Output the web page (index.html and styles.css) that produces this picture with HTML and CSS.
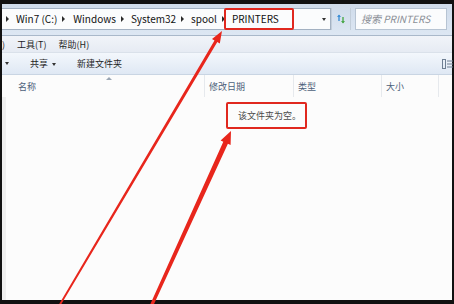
FILE: index.html
```html
<!DOCTYPE html>
<html lang="zh-CN">
<head>
    <meta charset="UTF-8">
    <meta name="viewport" content="width=device-width, initial-scale=1.0">
    <title>PRINTERS</title>
    <link rel="stylesheet" href="styles.css">
</head>
<body>
    <div class="screen">
        <div class="window">
            <div class="address-bar">
                <div class="crumbs">
                    <span class="sep"></span>
                    <span class="crumb">Win7 (C:)</span>
                    <span class="sep"></span>
                    <span class="crumb">Windows</span>
                    <span class="sep"></span>
                    <span class="crumb">System32</span>
                    <span class="sep"></span>
                    <span class="crumb">spool</span>
                    <span class="sep"></span>
                    <span class="crumb crumb-marked">PRINTERS</span>
                    <span class="drop"></span>
                </div>
                <div class="refresh">
                    <svg width="10" height="10" viewBox="0 0 10 10">
                        <path d="M3 1 L3 7" stroke="#3d8fd6" stroke-width="1.4"/>
                        <path d="M1 3 L3 0.5 L5 3 Z" fill="#3d8fd6"/>
                        <path d="M7 3 L7 9" stroke="#4aa84a" stroke-width="1.4"/>
                        <path d="M5 7 L7 9.5 L9 7 Z" fill="#4aa84a"/>
                    </svg>
                </div>
                <div class="search">搜索 PRINTERS</div>
            </div>

            <div class="menubar">
                <span>)</span>
                <span>工具(T)</span>
                <span>帮助(H)</span>
            </div>

            <div class="toolbar">
                <span class="tool-caret"></span>
                <span class="tool">共享 <span class="tool-caret"></span></span>
                <span class="tool">新建文件夹</span>
                <span class="view-icon">
                    <svg width="11" height="10" viewBox="0 0 11 10">
                        <rect x="0.5" y="0.5" width="3" height="9" fill="none" stroke="#6f7f93"/>
                        <path d="M5 2 H11 M5 5 H11 M5 8 H11" stroke="#6f7f93" stroke-width="1"/>
                    </svg>
                </span>
            </div>

            <div class="columns">
                <div class="col col-name"><span class="sort"></span>名称</div>
                <div class="col col-date">修改日期</div>
                <div class="col col-type">类型</div>
                <div class="col col-size">大小</div>
                <div class="col col-rest"></div>
            </div>

            <div class="content">
                <div class="empty">该文件夹为空。</div>
            </div>
        </div>

        <svg class="arrows" width="454" height="304" viewBox="0 0 454 304">
            <polygon fill="#e8261c" points="222,31 219.8,43.6 217.3,42.1 60.8,305 59.2,304 214.5,40.5 212,39"/>
            <polygon fill="#e8261c" points="231,131 230.6,145.1 227.9,143.8 153.6,305 150.4,304 223.3,141.8 220.6,140.5"/>
        </svg>
    </div>
</body>
</html>
```

FILE: styles.css
```css
body {
    margin: 0;
    background-color: #111;
    font-family: "Noto Sans CJK SC", "Liberation Sans", sans-serif;
    color: #1e1e1e;
    overflow: hidden;
}

.screen {
    position: relative;
    width: 454px;
    height: 304px;
    padding: 4px 2px;
    box-sizing: border-box;
    background-color: #111;
}

.window {
    height: 296px;
    display: flex;
    flex-direction: column;
    background-color: #fcfcfc;
}

/* address row */
.address-bar {
    height: 32px;
    display: flex;
    align-items: flex-start;
    padding-top: 4px;
    box-sizing: border-box;
    background: linear-gradient(#cfdbea, #dde7f3);
    border-bottom: 1px solid #a9b8ca;
}

.crumbs {
    width: 329px;
    height: 22px;
    display: flex;
    align-items: center;
    background-color: #fbfcfd;
    border: 1px solid #a3b1c2;
    border-left: none;
    box-sizing: border-box;
    font-size: 10px;
    line-height: 12px;
    color: #111;
}

.sep {
    width: 0;
    height: 0;
    border-left: 3px solid #2b2b2b;
    border-top: 3px solid transparent;
    border-bottom: 3px solid transparent;
    margin: 0 7px 0 5px;
}

.crumbs .sep:first-child {
    margin-left: 4px;
}

.crumbs .sep:nth-child(3) {
    margin-right: 8px;
}

.crumb-marked {
    border: 2px solid #e0281f;
    border-radius: 2px;
    padding: 3px 13px 3px 6px;
    margin-left: -8px;
}

.drop {
    width: 0;
    height: 0;
    border-top: 3px solid #333;
    border-left: 2.5px solid transparent;
    border-right: 2.5px solid transparent;
    margin-left: auto;
    margin-right: 4px;
}

.refresh {
    width: 20px;
    height: 22px;
    display: flex;
    align-items: center;
    justify-content: center;
    border-left: 1px solid #c3ceda;
    border-right: 1px solid #c3ceda;
    box-sizing: border-box;
}

.search {
    width: 92px;
    height: 22px;
    margin-left: 4px;
    padding-left: 5px;
    box-sizing: border-box;
    background-color: #fbfcfd;
    border: 1px solid #b7c4d3;
    font-size: 10px;
    line-height: 20px;
    font-style: italic;
    color: #8a8f97;
}

/* menu + toolbar */
.menubar {
    height: 16px;
    display: flex;
    align-items: center;
    gap: 12px;
    font-size: 9px;
    background: linear-gradient(#f1f4f9, #e6ebf3);
    border-bottom: 1px solid #dae1ea;
}

.toolbar {
    height: 21px;
    display: flex;
    align-items: center;
    gap: 21px;
    padding-left: 1px;
    font-size: 9px;
    background: linear-gradient(#f3f7fc, #dfe8f4);
    border-bottom: 1px solid #c9d5e3;
}

.tool-caret {
    display: inline-block;
    width: 0;
    height: 0;
    border-top: 3px solid #333;
    border-left: 2.5px solid transparent;
    border-right: 2.5px solid transparent;
    vertical-align: middle;
    margin-left: 2px;
}

.view-icon {
    margin-left: auto;
    margin-right: -1px;
    display: flex;
}

/* list header */
.columns {
    height: 22px;
    display: flex;
    font-size: 9px;
    color: #4c607a;
    background-color: #fcfcfc;
}

.col {
    position: relative;
    display: flex;
    align-items: center;
    border-right: 1px solid #e6e9ed;
    box-sizing: border-box;
    padding-left: 4px;
}

.col-name {
    width: 203px;
    padding-left: 16px;
}

.col-date {
    width: 89px;
}

.col-type {
    width: 88px;
}

.col-size {
    width: 57px;
}

.col-rest {
    flex: 1;
    border-right: none;
}

.sort {
    position: absolute;
    top: 2px;
    left: 104px;
    width: 0;
    height: 0;
    border-bottom: 3px solid #9aa6b4;
    border-left: 3px solid transparent;
    border-right: 3px solid transparent;
}

/* empty folder */
.content {
    flex: 1;
    border-left: 4px solid #efefef;
    padding-top: 5px;
}

.empty {
    width: 81px;
    height: 27px;
    margin-left: 220px;
    box-sizing: border-box;
    border: 2px solid #e0281f;
    border-radius: 2px;
    padding-left: 10px;
    font-size: 9px;
    line-height: 23px;
    color: #4a4a4a;
}

.arrows {
    position: absolute;
    top: 0;
    left: 0;
    pointer-events: none;
}
```
